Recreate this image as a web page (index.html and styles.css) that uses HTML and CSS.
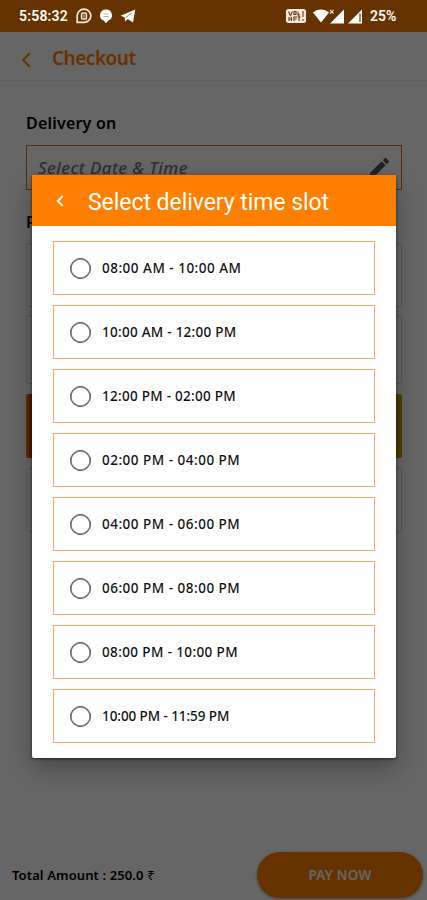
FILE: index.html
```html
<!DOCTYPE html>
<html lang="en">

<head>
    <title>Checkout</title>
    <meta charset="utf-8">
    <meta name="viewport" content="width=device-width, initial-scale=1">
    <link rel="stylesheet" href="styles.css">
</head>

<body>
    <div class="screen">
        <div class="statusbar">
            <span class="clock">5:58:32</span>
            <svg class="st-chat" width="16" height="16" viewBox="0 0 16 16" fill="none" stroke="#f3e6db">
                <path d="M1.200 14.400V8a6.800 6.600 0 1 1 6.800 6.400z" stroke-width="1.700" />
                <rect x="5.600" y="4.900" width="4.800" height="6.200" rx="1.200" stroke-width="1.500" />
                <path d="M8 6.500v3" stroke-width="1" />
            </svg>
            <svg class="st-bubble" width="12" height="15" viewBox="0 0 12 15">
                <path d="M6 .5a5.700 5.700 0 0 1 2.300 11L6 14.300l-2.300-2.800A5.700 5.700 0 0 1 6 .5z" fill="#fff" />
                <path d="M3.500 5h5M3.500 7.500h5" stroke="#c9a88c" stroke-width="1" />
            </svg>
            <svg class="st-plane" width="16" height="14" viewBox="0 0 16 14">
                <path d="M.5 6.800 15.300.5 13 13.500 7.800 10l-2.500 2.600-.8-4.300z" fill="#fff" />
                <path d="M5.500 8.800 11.500 4" fill="none" stroke="#8e5c31" stroke-width=".8" />
            </svg>
            <span class="grow"></span>
            <svg class="st-volte" width="20" height="14" viewBox="0 0 20 14">
                <rect width="20" height="14" rx="2.500" fill="#f5e9df" />
                <path d="M2.500 2.500l2 4 2-4M8 2.500h2v3H8zM12 2.500v4M3 8v4M5.500 8v4M3 10h2.500M8 12V8h3M8 10h2.500M13 5v7M11.500 8h3M17 2v6M17 10v2" fill="none" stroke="#6b3a10" stroke-width="1.100" />
            </svg>
            <svg class="st-wifi" width="16" height="14" viewBox="0 0 16 14">
                <path d="M0 3.500C4.500-.6 11.500-.6 16 3.500L8 13.500z" fill="#fff" />
            </svg>
            <svg class="st-signal" width="16" height="15" viewBox="0 0 16 15">
                <path d="M15 .5V14.500H1z" fill="#fff" />
                <path d="M1 1l3.500 3.500M4.500 1L1 4.500" stroke="#ecd9c9" stroke-width="1.100" />
            </svg>
            <svg class="st-signal2" width="15" height="15" viewBox="0 0 15 15">
                <path d="M14 .5V14.500H0z" fill="#fff" />
                <path d="M12 4.500V13" stroke="#6b3a10" stroke-width="1.200" />
            </svg>
            <span class="battery">25%</span>
        </div>

        <div class="appbar">
            <svg width="10" height="16" viewBox="0 0 10 16" fill="none" stroke="#ff8000" stroke-width="2">
                <path d="M8.800 1.200 2 8l6.800 6.800" />
            </svg>
            <span class="appbar-title">Checkout</span>
        </div>

        <div class="content">
            <div class="label">Delivery on</div>
            <div class="field">
                <span>Select Date &amp; Time</span>
                <svg width="19" height="19" viewBox="0 0 18 18" fill="#555">
                    <path d="M0 14.250V18h3.750L14.810 6.940l-3.750-3.750zM17.710 4.040a1 1 0 0 0 0-1.410L15.370.29a1 1 0 0 0-1.410 0l-1.830 1.830 3.750 3.750z" />
                </svg>
            </div>
            <div class="label label-pay">Payment</div>
            <div class="card"></div>
            <div class="card card-tall"></div>
            <div class="card card-promo"></div>
            <div class="card"></div>
        </div>

        <div class="footer">
            <span class="total">Total Amount : 250.0 <span class="rupee">₹</span></span>
            <button class="pay">PAY NOW</button>
        </div>

        <div class="overlay">
            <div class="dialog">
                <div class="dialog-head">
                    <svg width="8" height="12" viewBox="0 0 8 12" fill="none" stroke="#fff" stroke-width="1.900">
                        <path d="M6.800 1 1.800 6l5 5" />
                    </svg>
                    <span>Select delivery time slot</span>
                </div>
                <div class="slots">
                    <div class="slot"><i class="radio"></i><span>08:00 AM - 10:00 AM</span></div>
                    <div class="slot"><i class="radio"></i><span>10:00 AM - 12:00 PM</span></div>
                    <div class="slot"><i class="radio"></i><span>12:00 PM - 02:00 PM</span></div>
                    <div class="slot"><i class="radio"></i><span>02:00 PM - 04:00 PM</span></div>
                    <div class="slot"><i class="radio"></i><span>04:00 PM - 06:00 PM</span></div>
                    <div class="slot"><i class="radio"></i><span>06:00 PM - 08:00 PM</span></div>
                    <div class="slot"><i class="radio"></i><span>08:00 PM - 10:00 PM</span></div>
                    <div class="slot"><i class="radio"></i><span>10:00 PM - 11:59 PM</span></div>
                </div>
            </div>
        </div>
    </div>
</body>

</html>
```

FILE: styles.css
```css
* {
    box-sizing: border-box;
}

body {
    margin: 0;
    font-family: "Noto Sans", sans-serif;
}

svg {
    display: block;
    flex: none;
}

.screen {
    position: relative;
    display: flex;
    flex-direction: column;
    height: 900px;
    overflow: hidden;
    background: #fff;
}

/* sits above the dimmed page */
.statusbar {
    position: relative;
    z-index: 2;
    display: flex;
    align-items: center;
    flex: none;
    height: 32px;
    padding: 0 30px 0 19px;
    background: #663300;
    color: #fff;
    font-family: Roboto, sans-serif;
    font-size: 14px;
    font-weight: 600;
}

.clock {
    width: 57px;
    letter-spacing: 0.2px;
}

.st-bubble {
    margin-left: 8px;
}

.st-plane {
    margin-left: 8px;
}

.grow {
    flex: 1;
}

.st-wifi {
    margin-left: 7px;
}

.st-signal2 {
    margin-left: 3px;
}

.battery {
    width: 27px;
    margin-left: 7px;
    font-size: 14px;
}

.appbar {
    display: flex;
    align-items: center;
    flex: none;
    height: 48px;
    padding: 7px 0 0 21px;
    box-shadow: 0 1px 1px #eee;
}

.appbar-title {
    margin: -3px 0 0 21px;
    color: #ff8000;
    font-size: 19px;
    font-weight: 600;
    letter-spacing: -0.5px;
}

.content {
    flex: 1;
    padding: 31px 25px 0 26px;
}

.label {
    height: 34px;
    color: #000;
    font-size: 16px;
    font-weight: 600;
    line-height: 25px;
    letter-spacing: 0.2px;
}

.label-pay {
    height: 33px;
    margin-top: 20px;
}

.field {
    display: flex;
    justify-content: space-between;
    align-items: center;
    height: 45px;
    padding: 0 12px 0 11px;
    border: 1px solid #e06c1c;
    color: #777;
    font-size: 17px;
    font-weight: 500;
    font-style: italic;
    letter-spacing: 0.4px;
}

.card {
    height: 64px;
    margin-bottom: 8px;
    border: 1px solid #ddd;
    border-radius: 2px;
}

.card-tall {
    height: 69px;
    margin-bottom: 10px;
}

.card-promo {
    height: 64px;
    margin-bottom: 10px;
    border: 0;
    background: linear-gradient(to right, #ff8000 0, #d83c00 5px, #f80 50%, #c89800 100%);
}

.footer {
    display: flex;
    justify-content: space-between;
    align-items: center;
    flex: none;
    height: 50px;
    padding: 0 4px 0 12px;
}

.total {
    font-size: 13px;
    font-weight: 600;
    letter-spacing: 0.12px;
}

.rupee {
    font-weight: 400;
}

.pay {
    width: 166px;
    height: 46px;
    border: 0;
    border-radius: 23px;
    background: #ff8000;
    box-shadow: 0 1px 3px rgba(0, 0, 0, 0.4);
    color: #fff;
    font-family: "Noto Sans", sans-serif;
    font-size: 13.5px;
    font-weight: 600;
    letter-spacing: 0.2px;
}

.overlay {
    position: absolute;
    inset: 0;
    z-index: 1;
    padding: 175px 31px 0 32px;
    background: rgba(0, 0, 0, 0.6);
}

.dialog {
    height: 583px;
    overflow: hidden;
    border-radius: 2px;
    background: #fff;
    box-shadow: 0 10px 24px rgba(0, 0, 0, 0.3), 0 1px 3px rgba(0, 0, 0, 0.6);
}

.dialog-head {
    display: flex;
    align-items: center;
    height: 51px;
    padding-left: 24px;
    background: #ff8000;
    color: #fff;
    font-family: Roboto, sans-serif;
    font-size: 23px;
}

.dialog-head span {
    margin: 3px 0 0 24px;
    letter-spacing: -0.05px;
    white-space: nowrap;
}

.slots {
    display: flex;
    flex-direction: column;
    gap: 10px;
    padding: 15px 21px;
}

.slot {
    display: flex;
    align-items: center;
    height: 54px;
    padding-left: 16px;
    border: 1px solid #f2a765;
    color: #111;
    font-size: 13.5px;
    font-weight: 500;
    letter-spacing: 0.5px;
    white-space: nowrap;
}

.slot:nth-child(2),
.slot:nth-child(3) {
    letter-spacing: 0.27px;
}

.slot:nth-child(7) {
    letter-spacing: 0.38px;
}

.slot:nth-child(8) {
    letter-spacing: -0.08px;
}

.radio {
    width: 21px;
    height: 21px;
    margin-right: 11px;
    border: 1px solid #444;
    border-radius: 50%;
    box-shadow: inset 0 0 0 0.5px #555;
}
```
